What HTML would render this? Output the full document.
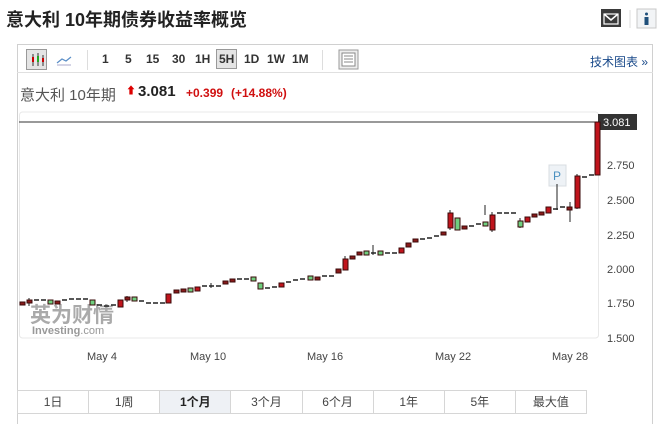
<!DOCTYPE html>
<html><head><meta charset="utf-8"><style>
*{margin:0;padding:0;box-sizing:border-box}
body{width:668px;height:423px;background:#fff;font-family:"Liberation Sans","Noto Sans CJK SC",sans-serif;position:relative;overflow:hidden}
.a{position:absolute;white-space:nowrap}
.tb span{position:absolute;top:52px;font-size:12px;font-weight:bold;color:#333}
.btns{position:absolute;left:17px;top:390px;width:570px;height:24px;border:1px solid #d6d6d6;display:flex;background:#fff}
.btns div{flex:1;text-align:center;font-size:12px;line-height:22px;color:#444;border-right:1px solid #d6d6d6}
.btns div:last-child{border-right:none}
</style></head><body>
<div class="a" style="left:6px;top:6px;font-size:18px;font-weight:bold;color:#222">意大利 10年期债券收益率概览</div>
<svg class="a" style="left:600px;top:8px" width="60" height="22"><rect x="1" y="1" width="20" height="18" fill="#3a3a3a"/><path d="M4 6 L11 12 L18 6" stroke="#fff" stroke-width="1.6" fill="none"/><rect x="4" y="6" width="14" height="10" fill="none" stroke="#fff" stroke-width="1.2"/><line x1="30" y1="2" x2="30" y2="20" stroke="#ddd"/><rect x="37" y="1" width="19" height="19" fill="#f2f4f6" stroke="#c8c8c8"/><circle cx="46.5" cy="6" r="1.5" fill="#1f4f7a"/><rect x="44.5" y="9" width="4" height="8" fill="#1f4f7a"/></svg>
<div class="a" style="left:17px;top:44px;width:636px;height:380px;border:1px solid #d0d0d0;border-bottom:none"></div>
<div class="a" style="left:17px;top:72px;width:636px;height:1px;background:#e0e0e0"></div>
<div class="a" style="left:26px;top:49px;width:21px;height:21px;border:1px solid #999;background:#e4e4e4"></div>
<svg class="a" style="left:28px;top:51px" width="44" height="18"><path d="M5 3v12M10 2v13M15 4v11" stroke="#333"/><rect x="4" y="6" width="2" height="5" fill="#c00"/><rect x="9" y="5" width="2" height="6" fill="#2a2"/><rect x="14" y="7" width="2" height="4" fill="#c00"/><path d="M29 12 L34 8 L38 10 L43 6" stroke="#5a8ec7" fill="none" stroke-width="1.2"/><line x1="29" y1="14" x2="43" y2="14" stroke="#aac"/></svg>
<div class="a" style="left:87px;top:50px;width:1px;height:20px;background:#ddd"></div>
<div class="tb"><span style="left:102px">1</span><span style="left:125px">5</span><span style="left:146px">15</span><span style="left:172px">30</span><span style="left:195px">1H</span><span style="left:216px;top:49px;border:1px solid #999;background:#e4e4e4;padding:2px 2px;">5H</span><span style="left:244px">1D</span><span style="left:267px">1W</span><span style="left:292px">1M</span></div>
<div class="a" style="left:322px;top:50px;width:1px;height:20px;background:#ddd"></div>
<svg class="a" style="left:338px;top:49px" width="22" height="22"><rect x="1" y="1" width="19" height="19" fill="#eee" stroke="#999"/><rect x="4" y="4" width="13" height="13" fill="#fff" stroke="#888"/><path d="M6 7h9M6 10h9M6 13h9" stroke="#888"/></svg>
<div class="a" style="left:590px;top:53px;font-size:12px;color:#1a4a8a">技术图表 »</div>
<div class="a" style="left:20px;top:84px;font-size:15px;color:#555">意大利 10年期</div>
<div class="a" style="left:126px;top:82px;font-size:10px;color:#d00">⬆</div>
<div class="a" style="left:138px;top:83px;font-size:15px;font-weight:bold;color:#222">3.081</div>
<div class="a" style="left:186px;top:86px;font-size:12px;font-weight:bold;color:#d01010">+0.399</div>
<div class="a" style="left:231px;top:86px;font-size:12px;font-weight:bold;color:#d01010">(+14.88%)</div>
<svg class="a" style="left:0;top:100px" width="668" height="270">
<rect x="19.5" y="12" width="579" height="226" fill="#fff" stroke="#e8e8e8" rx="3"/>
<line x1="19" y1="22" x2="598" y2="22" stroke="#333"/>
<rect x="598" y="14" width="39" height="16" fill="#333"/>
<text x="603" y="26" font-size="11" fill="#fff" font-family="Liberation Sans">3.081</text>
<g font-size="11" fill="#444" font-family="Liberation Sans"><text x="607" y="69">2.750</text><text x="607" y="104">2.500</text><text x="607" y="139">2.250</text><text x="607" y="173">2.000</text><text x="607" y="207">1.750</text><text x="607" y="242">1.500</text>
<text x="87" y="260">May 4</text><text x="190" y="260">May 10</text><text x="307" y="260">May 16</text><text x="435" y="260">May 22</text><text x="552" y="260">May 28</text></g>
<text x="30" y="222" font-size="21" font-weight="bold" fill="#aaa" font-family="Noto Sans CJK SC">英为财情</text>
<text x="32" y="234" font-size="11" font-weight="bold" fill="#999" font-family="Liberation Sans">Investing<tspan font-weight="normal">.com</tspan></text>
<rect x="549" y="65" width="17" height="21" fill="#eef2f6" stroke="#d8dde2"/><text x="553" y="80" font-size="12" fill="#4a90c0" font-family="Liberation Sans">P</text><line x1="557" y1="86" x2="557" y2="94" stroke="#ccc"/>
<g stroke="#3a0a0a" stroke-width="1" fill="#8a1a1a">
<path d="M29 198v8M127 196v6M211 183v5M345 156v14M373 145v10M450 110v20M485 105v10M492 112v20M520 118v10M557 84v26M570 102v20M577 74v35" stroke="#222"/>
<rect x="20" y="202" width="5" height="3"/><rect x="27" y="200" width="5" height="3"/>
<path d="M34 200h5M41 200h5M62 200h5M69 199h5M76 199h5M83 199h5M97 205h5M104 206h5M111 205h5M139 201h5M146 203h5M153 203h5M160 203h5M202 186h5M209 186h5M216 186h5M237 179h5M244 179h5M265 188h5M272 187h5M286 182h5M293 180h5M300 179h5M322 176h5M329 176h5M371 153h5M385 153h5M392 153h5M420 139h5M427 138h5M434 136h5M469 126h5M476 124h5M497 113h5M504 113h5M511 113h5M553 109h5M560 107h5M582 77h5M589 75h5" stroke="#222" stroke-width="1.5"/>
<rect x="48" y="200" width="5" height="4" fill="#6fcf7f"/><rect x="55" y="201" width="5" height="3"/>
<rect x="90" y="200" width="5" height="5" fill="#6fcf7f"/>
<rect x="118" y="200" width="5" height="7" fill="#c0141c"/><rect x="125" y="197" width="5" height="3"/><rect x="132" y="197" width="5" height="4" fill="#6fcf7f"/>
<rect x="166" y="194" width="5" height="9" fill="#c0141c"/><rect x="174" y="190" width="5" height="3"/><rect x="181" y="189" width="5" height="3"/><rect x="188" y="188" width="5" height="4" fill="#6fcf7f"/><rect x="195" y="187" width="5" height="4" fill="#c0141c"/>
<rect x="223" y="181" width="5" height="3"/><rect x="230" y="179" width="5" height="3"/><rect x="251" y="177" width="5" height="4" fill="#6fcf7f"/><rect x="258" y="183" width="5" height="6" fill="#6fcf7f"/>
<rect x="279" y="183" width="5" height="4" fill="#c0141c"/><rect x="308" y="176" width="5" height="4" fill="#6fcf7f"/><rect x="315" y="177" width="5" height="3"/>
<rect x="336" y="169" width="5" height="4"/><rect x="343" y="159" width="5" height="11" fill="#c0141c"/><rect x="350" y="156" width="5" height="3"/><rect x="357" y="152" width="5" height="3"/><rect x="364" y="151" width="5" height="4" fill="#6fcf7f"/><rect x="378" y="151" width="5" height="4" fill="#6fcf7f"/>
<rect x="399" y="148" width="5" height="5" fill="#c0141c"/><rect x="406" y="143" width="5" height="4"/><rect x="413" y="139" width="5" height="3"/>
<rect x="441" y="132" width="5" height="3"/><rect x="448" y="113" width="5" height="15" fill="#c0141c"/><rect x="455" y="118" width="5" height="12" fill="#6fcf7f"/><rect x="462" y="126" width="5" height="3"/><rect x="483" y="122" width="5" height="4" fill="#6fcf7f"/><rect x="490" y="115" width="5" height="15" fill="#c0141c"/>
<rect x="518" y="121" width="5" height="6" fill="#6fcf7f"/><rect x="525" y="117" width="5" height="5" fill="#c0141c"/><rect x="532" y="114" width="5" height="3"/><rect x="539" y="112" width="5" height="3"/><rect x="546" y="107" width="5" height="6" fill="#c0141c"/><rect x="567" y="107" width="5" height="3"/>
<rect x="575" y="76" width="5" height="32" fill="#c0141c"/><rect x="595" y="22" width="5" height="53" fill="#c0141c"/>
</g>
</svg>
<div class="btns"><div>1日</div><div>1周</div><div style="background:#eef1f5;font-weight:bold;color:#222">1个月</div><div>3个月</div><div>6个月</div><div>1年</div><div>5年</div><div>最大值</div></div>
</body></html>
